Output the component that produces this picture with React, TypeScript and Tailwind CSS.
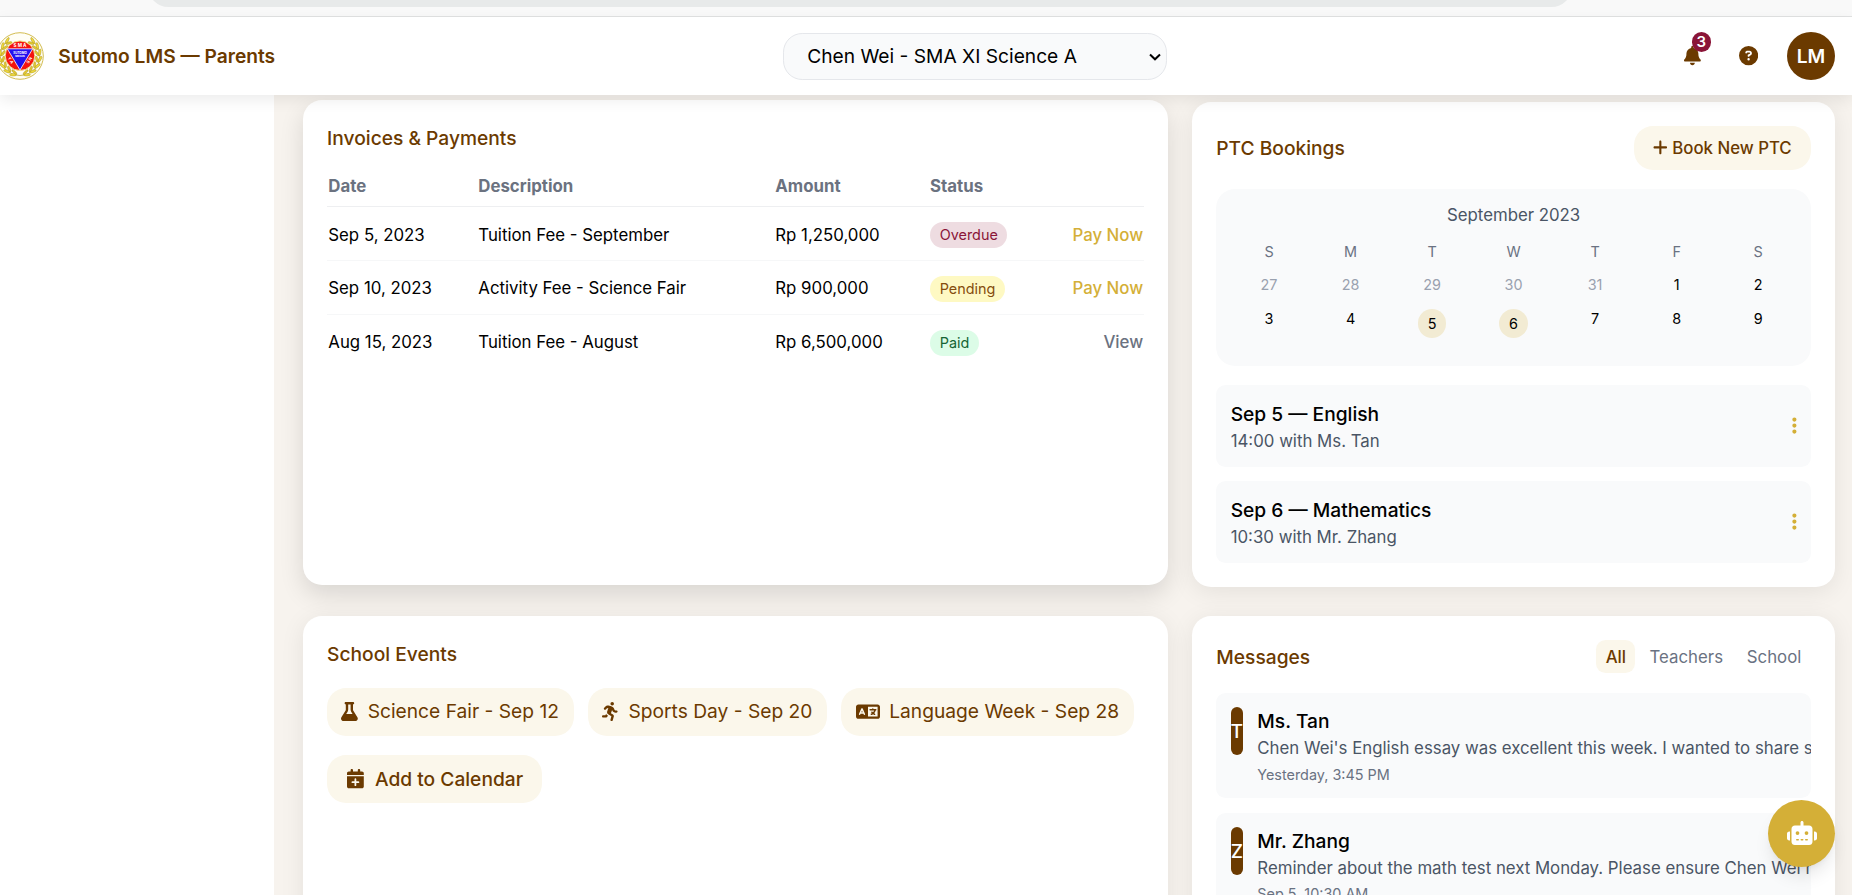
import React from "react";
import {
  FaBell,
  FaCalendarPlus,
  FaCircleQuestion,
  FaEllipsisVertical,
  FaFlask,
  FaLanguage,
  FaPersonRunning,
  FaPlus,
  FaRobot,
} from "react-icons/fa6";

const CARD = "rounded-2xl bg-white p-5 shadow-[0_4px_20px_rgba(0,0,0,0.08)]";

const leafAngles = [-46, -26, -6, 14, 34, 54, 74];

function LaurelBranch() {
  return (
    <>
      <path d="M38 10a19.5 19.5 0 0 1-14 33.5" fill="none" stroke="#b39a22" strokeWidth="0.7" />
      {leafAngles.map((a) => (
        <g key={a} transform={`rotate(${a} 24 24)`}>
          <ellipse cx="44" cy="22.5" rx="1.2" ry="3.5" fill="#f0da3c" stroke="#a08a1c" strokeWidth="0.4" transform="rotate(16 44 22.5)" />
          <ellipse cx="41" cy="23" rx="1.1" ry="3.2" fill="#e4ca30" stroke="#a08a1c" strokeWidth="0.4" transform="rotate(-28 41 23)" />
        </g>
      ))}
    </>
  );
}

function Logo() {
  return (
    <svg viewBox="0 0 48 48" className="size-10 shrink-0">
      <circle cx="24" cy="24" r="23.3" fill="#fffef6" stroke="#d3bd52" strokeWidth="1" />
      <LaurelBranch />
      <g transform="translate(48 0) scale(-1 1)">
        <LaurelBranch />
      </g>
      <circle cx="24" cy="23.7" r="14.8" fill="#f5140f" stroke="#f3e58a" strokeWidth="1" />
      <path d="M11.3 16.8h25.4L24 38z" fill="#2310f0" stroke="#fff" strokeWidth="0.8" />
      <g fill="#fff" fontFamily="Inter, sans-serif" fontWeight="700" textAnchor="middle">
        <text x="24" y="14.6" fontSize="4.6">S M A</text>
        <text x="24" y="21.5" fontSize="3">SUTOMO</text>
        <text x="24" y="24.8" fontSize="2.6">MEDAN</text>
        <text x="13.5" y="29" fontSize="4" transform="rotate(60 13.5 29)">Y A</text>
        <text x="34.5" y="29" fontSize="4" transform="rotate(-60 34.5 29)">S N</text>
      </g>
    </svg>
  );
}

function Header() {
  return (
    <header className="relative z-10 flex h-[65px] shrink-0 items-center justify-between bg-white pr-[14.2px] shadow-[0_4px_12px_rgba(0,0,0,0.08)]">
      <div className="-ml-[3.4px] flex w-[656px] items-center gap-3">
        <Logo />
        <span className="font-semibold text-[#6b3a00]">Sutomo LMS — Parents</span>
      </div>
      <div className="relative mt-[0.8px]">
        <select className="block h-[39.2px] w-80 appearance-none rounded-2xl border border-gray-200 bg-gray-50 px-[19.2px] text-base text-black">
          <option>Chen Wei - SMA XI Science A</option>
        </select>
        <svg viewBox="0 0 12 8" className="pointer-events-none absolute top-[16.4px] right-[5px] h-[6.7px] w-[10px]">
          <path d="M1 1.5 6 6.3 11 1.5" fill="none" stroke="#000" strokeWidth="2" />
        </svg>
      </div>
      <div className="flex flex-1 items-center justify-end text-[#6b3a00]">
        <div className="relative mr-[31.5px]">
          <FaBell className="h-4 w-3.5" />
          <span className="absolute -top-[11.7px] left-[6px] flex h-[16.6px] w-4 items-center justify-center rounded-full bg-[#8a1538] text-[12.5px] font-semibold text-white">
            3
          </span>
        </div>
        <FaCircleQuestion className="mr-6 size-4" />
        <div className="flex size-10 items-center justify-center rounded-full bg-[#6b3a00] font-semibold text-white">
          LM
        </div>
      </div>
    </header>
  );
}

const invoices = [
  { date: "Sep 5, 2023", text: "Tuition Fee - September", amount: "Rp 1,250,000", status: "Overdue", badge: "bg-[#eedce1] text-[#8a1538]", action: "Pay Now", link: "text-[#d4af37]", pad: "pt-[2.6px]" },
  { date: "Sep 10, 2023", text: "Activity Fee - Science Fair", amount: "Rp 900,000", status: "Pending", badge: "bg-[#fef9c3] text-[#854d0e]", action: "Pay Now", link: "text-[#d4af37]", pad: "pt-[2px]" },
  { date: "Aug 15, 2023", text: "Tuition Fee - August", amount: "Rp 6,500,000", status: "Paid", badge: "bg-[#dcfce7] text-[#166534]", action: "View", link: "text-[#6b7280]", pad: "pt-[0.6px]" },
];

function Invoices() {
  return (
    <section className="-mt-[2px] mb-[2px] rounded-2xl bg-white p-5 shadow-[0_8px_20px_rgba(0,0,0,0.12)]">
      <h2 className="font-medium text-[#6b3a00]">Invoices &amp; Payments</h2>
      <table className="mt-[14.5px] w-full table-fixed text-sm">
        <colgroup>
          <col className="w-[125px]" />
          <col className="w-[247.5px]" />
          <col className="w-[129px]" />
          <col />
          <col className="w-[100px]" />
        </colgroup>
        <thead>
          <tr className="h-[31px] border-b border-[#eeeff1] text-left text-[#6b7280]">
            <th className="px-px pt-[4px] pb-[6.5px] font-bold">Date</th>
            <th className="px-px pt-[4px] pb-[6.5px] font-bold">Description</th>
            <th className="px-px pt-[4px] pb-[6.5px] font-bold">Amount</th>
            <th className="px-px pt-[4px] pb-[6.5px] font-bold">Status</th>
            <th />
          </tr>
        </thead>
        <tbody>
          {invoices.map((r) => (
            <tr key={r.date} className="h-[45px] border-b border-[#f6f7f8] text-black last:border-0">
              <td className={`px-px ${r.pad}`}>{r.date}</td>
              <td className={`px-px ${r.pad}`}>{r.text}</td>
              <td className={`px-px ${r.pad}`}>{r.amount}</td>
              <td className="px-px pt-[1px]">
                <span className={`inline-flex h-[21.7px] items-center rounded-full px-2 align-middle text-xs ${r.badge}`}>{r.status}</span>
              </td>
              <td className={`pr-[0.6px] text-right font-medium ${r.pad} ${r.link}`}>{r.action}</td>
            </tr>
          ))}
        </tbody>
      </table>
    </section>
  );
}

const days = ["27", "28", "29", "30", "31", "1", "2", "3", "4", "5", "6", "7", "8", "9"];

function Bookings() {
  return (
    <section className={CARD}>
      <div className="flex h-[36.5px] items-center justify-between">
        <h2 className="pt-[1.4px] font-medium text-[#6b3a00]">PTC Bookings</h2>
        <button className="flex h-full items-center gap-1 rounded-2xl bg-[#fbf7eb] px-4 text-sm font-medium text-[#6b3a00]">
          <FaPlus className="h-3.5 w-[12.25px]" />
          <span className="pt-[2px]">Book New PTC</span>
        </button>
      </div>
      <div className="mt-4 h-[147.5px] rounded-2xl bg-gray-50 p-3">
        <div className="mb-[7.6px] pt-[0.4px] text-center text-sm text-gray-600">September 2023</div>
        <div className="grid grid-cols-7 gap-1 text-center text-xs">
          {["S", "M", "T", "W", "T", "F", "S"].map((d, i) => (
            <div key={i} className="p-1 text-gray-500">{d}</div>
          ))}
          {days.map((d, i) => (
            <div key={d} className={i < 5 ? "p-1 text-gray-400" : "p-1 text-black"}>
              {d === "5" || d === "6" ? (
                <div className="mx-auto flex size-6 items-center justify-center rounded-full bg-[#f2ebd3]">{d}</div>
              ) : (
                d
              )}
            </div>
          ))}
        </div>
      </div>
      <div className="mt-4 flex flex-col gap-3">
        {[
          ["Sep 5 — English", "14:00 with Ms. Tan"],
          ["Sep 6 — Mathematics", "10:30 with Mr. Zhang"],
        ].map(([title, sub]) => (
          <div key={title} className="flex h-[68px] items-center justify-between rounded-lg bg-gray-50 px-3">
            <div className="pt-[1.4px]">
              <div className="font-medium text-black">{title}</div>
              <div className="pt-[0.6px] text-sm text-gray-600">{sub}</div>
            </div>
            <FaEllipsisVertical className="h-4 w-1 text-[#d4af37]" />
          </div>
        ))}
      </div>
    </section>
  );
}

function Events() {
  const chip = "flex h-10 items-center gap-2 rounded-2xl bg-[#fbf7eb] pl-[11.8px] pr-[12.4px] text-[#6b3a00]";
  return (
    <section className={CARD}>
      <h2 className="font-medium text-[#6b3a00]">School Events</h2>
      <div className="mt-4 flex gap-[11.8px]">
        <div className={chip}><FaFlask className="h-4 w-3.5" />Science Fair - Sep 12</div>
        <div className={chip}><FaPersonRunning className="h-4 w-3.5" />Sports Day - Sep 20</div>
        <div className={chip}><FaLanguage className="h-4 w-5" />Language Week - Sep 28</div>
      </div>
      <button className="mt-4 flex h-10 items-center gap-[9.5px] rounded-2xl bg-[#fbf7eb] pr-[15.6px] pl-[16.4px] font-medium text-[#6b3a00]">
        <FaCalendarPlus className="h-4 w-3.5" />
        Add to Calendar
      </button>
    </section>
  );
}

const messages = [
  { letter: "T", name: "Ms. Tan", text: "Chen Wei's English essay was excellent this week. I wanted to share some of her work.", time: "Yesterday, 3:45 PM" },
  { letter: "Z", name: "Mr. Zhang", text: "Reminder about the math test next Monday. Please ensure Chen Wei reviews the notes.", time: "Sep 5, 10:30 AM" },
];

function Messages() {
  return (
    <section className={CARD}>
      <div className="flex items-center justify-between">
        <h2 className="pt-[0.6px] font-medium text-[#6b3a00]">Messages</h2>
        <div className="flex gap-1 text-sm text-gray-500">
          <button className="h-7 rounded-lg bg-[#fbf7eb] px-[7.8px] pt-[2px] font-medium text-[#6b3a00]">All</button>
          <button className="h-7 px-[7.8px] pt-[2px]">Teachers</button>
          <button className="h-7 px-2 pt-[2px]">School</button>
        </div>
      </div>
      <div className="mt-4 flex flex-col gap-3">
        {messages.map((m) => (
          <div key={m.name} className="flex gap-3 overflow-hidden rounded-lg bg-gray-50 p-3 whitespace-nowrap">
            <div className="flex h-10 w-[10.2px] shrink-0 items-center justify-center rounded-full bg-[#6b3a00] pt-[1px] font-medium text-white">
              {m.letter}
            </div>
            <div>
              <div className="font-medium text-black">{m.name}</div>
              <div className="pt-[1px] text-sm text-gray-600">{m.text}</div>
              <div className="mt-[3px] text-xs text-gray-500">{m.time}</div>
            </div>
          </div>
        ))}
      </div>
    </section>
  );
}

export default function App() {
  return (
    <div className="relative flex h-[745.83px] w-[1543.33px] flex-col overflow-hidden bg-[#f7f3ee] font-['Inter',sans-serif] text-base [zoom:1.2]">
      <div className="flex h-[14.17px] shrink-0 items-start overflow-hidden border-b border-[#e1e2e2] bg-[#f9f9f9] pl-[123px]">
        <div className="-mt-[28px] h-[34px] w-[1187px] rounded-[17px] bg-[#e8eaea]" />
      </div>
      <Header />
      <div className="flex min-h-0 flex-1">
        <aside className="w-[228.4px] shrink-0 bg-white" />
        <main className="grid h-[900px] flex-1 grid-cols-[720.6px_535.5px] grid-rows-[404.2px_404px] gap-x-[20.4px] gap-y-[24px] pt-[5.8px] pl-[24.2px]">
          <Invoices />
          <Bookings />
          <Events />
          <Messages />
        </main>
      </div>
      <button className="absolute top-[666.8px] left-[1473.3px] flex size-14 items-center justify-center rounded-full bg-[#d4af37] text-white shadow-lg">
        <FaRobot className="-mt-px h-5 w-[25px]" />
      </button>
    </div>
  );
}
